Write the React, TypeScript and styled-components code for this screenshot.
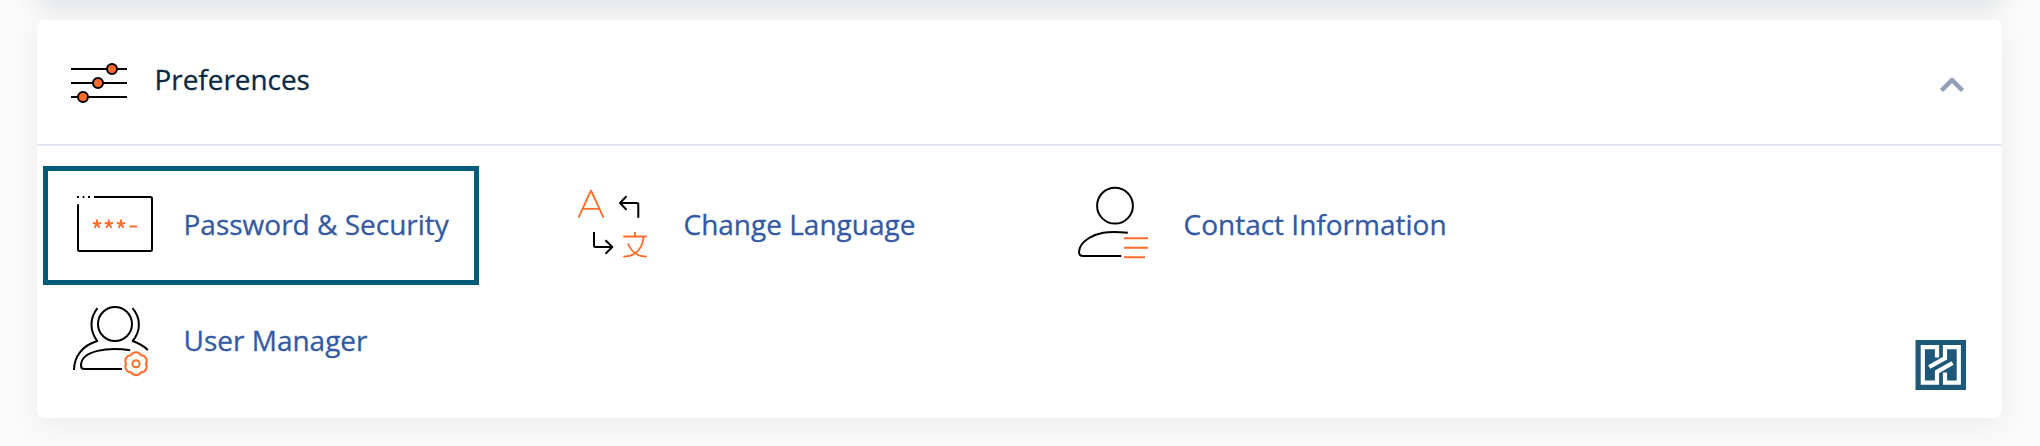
import React from "react";
import styled, { createGlobalStyle } from "styled-components";

const ORANGE = "#ff6c2c";

const GlobalStyle = createGlobalStyle`
  * { box-sizing: border-box; }
  body { margin: 0; background: #fafafa; }
`;

const Page = styled.main`
  height: 446px;
  padding: 0 38px 0 37px;
  overflow: hidden;
  font-family: "Open Sans", "Noto Sans", sans-serif;
`;

const PreviousPanel = styled.div`
  height: 60px;
  margin-top: -60px;
  border-radius: 8px;
  background: #fff;
  box-shadow: 0 6px 24px rgba(20, 35, 55, 0.12);
`;

const Panel = styled.section`
  position: relative;
  height: 398px;
  margin-top: 20px;
  border-radius: 8px;
  background: #fff;
  box-shadow: 0 8px 32px rgba(20, 35, 55, 0.058);
`;

const PanelHeader = styled.header`
  display: flex;
  align-items: center;
  height: 126px;
  padding: 0 36px 0 33px;
  border-bottom: 2px solid #e4e8f2;
`;

const PanelTitle = styled.h2`
  flex: 1;
  margin: -7px 0 0 24.5px;
  font-size: 27.9px;
  font-weight: 400;
  line-height: 40px;
  color: #0b2942;
  -webkit-text-stroke: 0.3px;
`;

const CollapseButton = styled.button`
  display: flex;
  padding: 5px 0 0;
  border: 0;
  background: none;
`;

const Tools = styled.div`
  display: grid;
  grid-template-columns: repeat(3, 436px);
  grid-auto-rows: 116px;
  column-gap: 64px;
  padding: 20px 0 0 6px;
`;

const Tool = styled.a<{ $active?: boolean }>`
  display: flex;
  height: 119px;
  padding: 15px 0 0 22px;
  border: 5px solid ${(p) => (p.$active ? "#005b78" : "transparent")};
  text-decoration: none;
`;

const ToolLabel = styled.span`
  margin: 18px 0 0 29.5px;
  font-size: 28px;
  line-height: 40px;
  white-space: nowrap;
  color: #3459a3;
  -webkit-text-stroke: 0.3px;
`;

const ToolIcon = styled.svg.attrs({ width: 84, height: 80, viewBox: "0 0 84 80" })`
  flex: none;
  fill: none;
  stroke: #000;
  stroke-width: 2;
  stroke-linecap: round;
  stroke-linejoin: round;
`;

const Watermark = styled.svg`
  position: absolute;
  right: 36px;
  bottom: 28px;
`;

const HeaderIcon = styled.svg.attrs({ width: 60, height: 44, viewBox: "0 0 60 44" })`
  margin-top: 3px;
  fill: ${ORANGE};
  stroke: #000;
  stroke-width: 2;
`;

const SlidersIcon = () => (
  <HeaderIcon>
    <path d="M1 7h56M1 21h56M1 35h56" />
    <circle cx="42" cy="7" r="5" />
    <circle cx="28" cy="21" r="5" />
    <circle cx="13" cy="35" r="5" />
  </HeaderIcon>
);

const PasswordIcon = () => (
  <ToolIcon>
    <path strokeLinecap="butt" d="M24 11H80.500Q82 11 82 12.500V63.500Q82 65 80.500 65H9.500Q8 65 8 63.500V18.300" />
    <path strokeLinecap="butt" d="M7 11h2M12.700 11h1.600M18 11h2" />
    <g stroke={ORANGE} strokeLinecap="butt">
      {[27, 38.800, 51].map((x) => (
        <path key={x} d={`M${x} 38v-4.500M${x} 38l-4-1.200M${x} 38l4-1.200M${x} 38l-2.600 3.700M${x} 38l2.600 3.700`} />
      ))}
      <path d="M59.500 40.500h7.700" />
    </g>
  </ToolIcon>
);

const LanguageIcon = () => (
  <ToolIcon>
    <g stroke={ORANGE} strokeWidth="1.800" strokeLinecap="butt">
      <path d="M8.500 31.700L21 4.500L33.500 31.700M12.500 22.800H29.500" />
      <path d="M65 46V50.500M53.300 50.500H76.700M73.500 50.500C73 62 66 70.500 53.300 70.700M58 57.500C61 65 67 70.500 76.700 70.700" />
    </g>
    <path strokeLinecap="butt" d="M68.300 31.700V18.500Q68.300 17 66.800 17H50M56.500 10.300L50 17L56.500 23.700" />
    <path strokeLinecap="butt" d="M24 46V59.500Q24 61 25.500 61H42.300M35.500 54.300L42.300 61L35.500 67.700" />
  </ToolIcon>
);

const ContactIcon = () => (
  <ToolIcon>
    <circle cx="45" cy="19.700" r="17.900" />
    <path strokeLinecap="butt" d="M57.800 46.700C36 44.500 27 47 19 52C12 56.500 9 62 9 66Q9 70 13 70H51.300" />
    <path stroke={ORANGE} strokeLinecap="butt" d="M54 52.300H78M54 61.700H78M54 71.200H75" />
  </ToolIcon>
);

/* Six rounded lobes: outward arcs between the notches of the gear. */
const gearOutline = (cx: number, cy: number) => {
  const notches = Array.from({ length: 7 }, (_, i) => {
    const t = (i * Math.PI) / 3;
    return `${(cx + 9.9 * Math.cos(t)).toFixed(2)} ${(cy + 9.9 * Math.sin(t)).toFixed(2)}`;
  });
  return `M${notches.join("A5.7 5.7 0 0 1 ")}Z`;
};

const UserManagerIcon = () => (
  <ToolIcon>
    <circle cx="45" cy="22" r="17" />
    <path strokeLinecap="butt" d="M27.500 6.200C19.500 16 19.500 29 27.300 39C12 43.500 4 55 4 68" />
    <path strokeLinecap="butt" d="M62.500 6.200C71 16 71 29 62.700 39C68 41 74 44 77.800 48" />
    <path strokeLinecap="butt" d="M60.200 48.300C39 45 11 48 11 63.500Q11 67 14.500 67H52" />
    <path stroke={ORANGE} d={gearOutline(66, 61.800)} />
    <circle stroke={ORANGE} cx="66" cy="61.800" r="3.500" />
  </ToolIcon>
);

const tools = [
  { label: "Password & Security", Icon: PasswordIcon, active: true },
  { label: "Change Language", Icon: LanguageIcon },
  { label: "Contact Information", Icon: ContactIcon },
  { label: "User Manager", Icon: UserManagerIcon },
];

export default function App() {
  return (
    <Page>
      <GlobalStyle />
      <PreviousPanel />
      <Panel>
        <PanelHeader>
          <SlidersIcon />
          <PanelTitle>Preferences</PanelTitle>
          <CollapseButton aria-label="Collapse">
            <svg width="28" height="20" viewBox="0 0 28 20" fill="none" stroke="#929fb9" strokeWidth="4.500" strokeLinejoin="round">
              <path d="M3.500 15.500L14 5L24.500 15.500" />
            </svg>
          </CollapseButton>
        </PanelHeader>
        <Tools>
          {tools.map(({ label, Icon, active }) => (
            <Tool key={label} $active={active}>
              <Icon />
              <ToolLabel>{label}</ToolLabel>
            </Tool>
          ))}
        </Tools>
        <Watermark width="51" height="50" viewBox="0 0 51 50">
          <path fill="#1d5878" d="M0.500 0H51V50H0.500Z" />
          <g fill="none" stroke="#fff" strokeWidth="4.200">
            <path d="M22 17.500V7.200H7.800V42.700H22V31.800L37.600 23" />
            <path d="M30 32.500V42.700H43.800V7.200H30V18.200L14.200 27" />
          </g>
        </Watermark>
      </Panel>
    </Page>
  );
}
